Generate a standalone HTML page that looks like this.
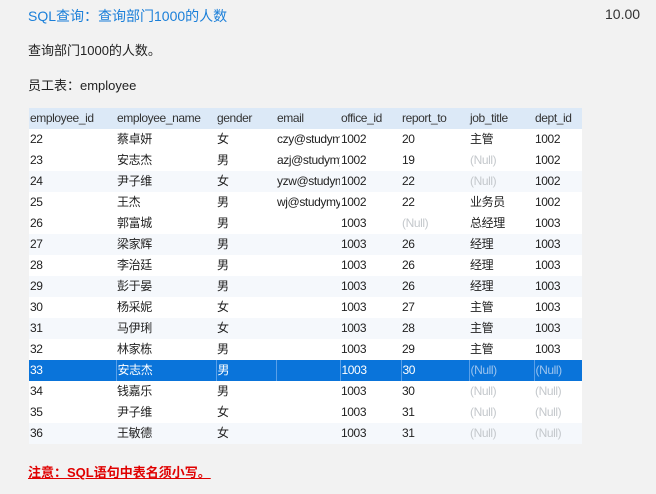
<!DOCTYPE html>
<html><head><meta charset="utf-8"><style>
body{margin:0;width:656px;height:494px;background:#f2f2f2;font-family:"Liberation Sans","Noto Sans CJK SC",sans-serif;position:relative;overflow:hidden}
.a{position:absolute;white-space:nowrap}
table{position:absolute;left:29px;top:108px;border-collapse:collapse;table-layout:fixed;width:553px;background:#fff;font-size:12px;letter-spacing:-0.4px;color:#222}
td{height:21px;padding:0 0 0 1px;overflow:hidden;white-space:nowrap;line-height:21px}
tr.h td{background:#dce9f7;color:#333}
tr.b td{background:#f5f8fc}
tr.s td{background:#0a74da;color:#fff;border-left:1px solid #5aa0e8}
tr.s td:first-child{border-left:none}
.n{color:#c4c8cc}
tr.s .n{color:#9cc4ee}
.r{text-align:right;padding-right:2px}
</style></head><body>
<div class="a" style="left:28px;top:6px;font-size:14px;color:#1a7fd9">SQL查询：查询部门1000的人数</div>
<div class="a" style="left:605px;top:6px;font-size:14px;color:#333">10.00</div>
<div class="a" style="left:28px;top:40px;font-size:13px;color:#222">查询部门1000的人数。</div>
<div class="a" style="left:28px;top:75px;font-size:13px;color:#222">员工表：employee</div>
<table>
<colgroup><col style="width:87px"><col style="width:100px"><col style="width:60px"><col style="width:64px"><col style="width:61px"><col style="width:68px"><col style="width:65px"><col style="width:48px"></colgroup>
<tr class="h"><td>employee_id</td><td>employee_name</td><td>gender</td><td>email</td><td>office_id</td><td>report_to</td><td>job_title</td><td>dept_id</td></tr>
<tr><td>22</td><td>蔡卓妍</td><td>女</td><td>czy@studymysql.com</td><td>1002</td><td>20</td><td>主管</td><td>1002</td></tr>
<tr><td>23</td><td>安志杰</td><td>男</td><td>azj@studymysql.com</td><td>1002</td><td>19</td><td class="n">(Null)</td><td>1002</td></tr>
<tr class="b"><td>24</td><td>尹子维</td><td>女</td><td>yzw@studymysql.com</td><td>1002</td><td>22</td><td class="n">(Null)</td><td>1002</td></tr>
<tr><td>25</td><td>王杰</td><td>男</td><td>wj@studymysql.com</td><td>1002</td><td>22</td><td>业务员</td><td>1002</td></tr>
<tr><td>26</td><td>郭富城</td><td>男</td><td></td><td>1003</td><td class="n">(Null)</td><td>总经理</td><td>1003</td></tr>
<tr class="b"><td>27</td><td>梁家辉</td><td>男</td><td></td><td>1003</td><td>26</td><td>经理</td><td>1003</td></tr>
<tr><td>28</td><td>李治廷</td><td>男</td><td></td><td>1003</td><td>26</td><td>经理</td><td>1003</td></tr>
<tr class="b"><td>29</td><td>彭于晏</td><td>男</td><td></td><td>1003</td><td>26</td><td>经理</td><td>1003</td></tr>
<tr><td>30</td><td>杨采妮</td><td>女</td><td></td><td>1003</td><td>27</td><td>主管</td><td>1003</td></tr>
<tr class="b"><td>31</td><td>马伊琍</td><td>女</td><td></td><td>1003</td><td>28</td><td>主管</td><td>1003</td></tr>
<tr><td>32</td><td>林家栋</td><td>男</td><td></td><td>1003</td><td>29</td><td>主管</td><td>1003</td></tr>
<tr class="s"><td>33</td><td>安志杰</td><td>男</td><td></td><td>1003</td><td>30</td><td class="n">(Null)</td><td class="n">(Null)</td></tr>
<tr><td>34</td><td>钱嘉乐</td><td>男</td><td></td><td>1003</td><td>30</td><td class="n">(Null)</td><td class="n">(Null)</td></tr>
<tr><td>35</td><td>尹子维</td><td>女</td><td></td><td>1003</td><td>31</td><td class="n">(Null)</td><td class="n">(Null)</td></tr>
<tr class="b"><td>36</td><td>王敏德</td><td>女</td><td></td><td>1003</td><td>31</td><td class="n">(Null)</td><td class="n">(Null)</td></tr>
</table>
<div class="a" style="left:28px;top:462px;font-size:13px;color:#e00000;font-weight:bold;text-decoration:underline">注意：SQL语句中表名须小写。</div>
</body></html>
